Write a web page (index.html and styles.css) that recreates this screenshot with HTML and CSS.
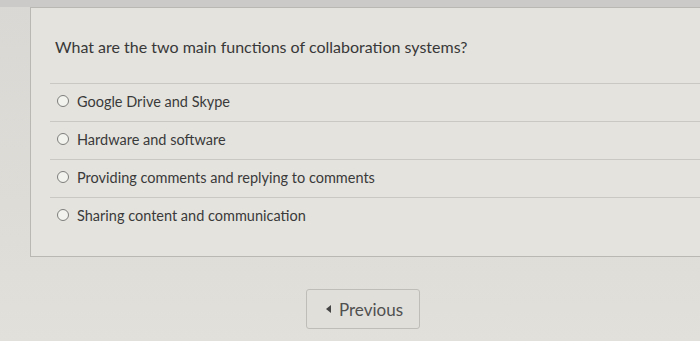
FILE: index.html
```html
<!DOCTYPE html>
<html>
<head>
<meta charset="utf-8">
<link rel="stylesheet" href="styles.css">
</head>
<body>
<div class="page">
  <div class="panel">
    <div class="question">What are the two main functions of collaboration systems?</div>
    <div class="options">
      <label class="option"><span class="radio"></span><span class="label">Google Drive and Skype</span></label>
      <label class="option"><span class="radio"></span><span class="label">Hardware and software</span></label>
      <label class="option"><span class="radio"></span><span class="label">Providing comments and replying to comments</span></label>
      <label class="option"><span class="radio"></span><span class="label">Sharing content and communication</span></label>
    </div>
  </div>
  <div class="nav">
    <button class="prev"><span class="tri"></span>Previous</button>
  </div>
</div>
</body>
</html>
```
FILE: styles.css
```css
html, body {
  margin: 0;
  padding: 0;
}
body {
  width: 700px;
  height: 341px;
  overflow: hidden;
  background: linear-gradient(180deg, #d9d8d4 0%, #dedcd7 60%, #e2e0da 100%);
  font-family: Lato, "Liberation Sans", sans-serif;
  color: #3b3b3b;
}
.page {
  border-top: 7px solid #cbcac8;
}
.panel {
  margin-left: 30px;
  height: 248px;
  border: 1px solid #b9b8b3;
  border-right: none;
  background: #e4e3de;
}
.question {
  padding: 29px 0 0 24px;
  font-size: 16px;
  line-height: 20px;
  height: 46px;
  color: #383838;
}
.options {
  margin-left: 19px;
}
.option {
  display: flex;
  align-items: center;
  height: 34px;
  padding-bottom: 3px;
  border-top: 1px solid #c9c8c3;
  padding-left: 7px;
}
.radio {
  width: 10px;
  height: 10px;
  border: 1.5px solid #7d7d7b;
  border-radius: 50%;
  background: #f2f2ef;
  margin-right: 8px;
  flex: none;
}
.label {
  font-size: 14.5px;
  color: #3a3a3a;
}
.nav {
  display: flex;
  justify-content: center;
  padding: 32px 0 0 25px;
}
.prev {
  width: 114px;
  height: 40px;
  background: #e0dfda;
  border: 1px solid #bebdb8;
  border-radius: 3px;
  font-family: Lato, "Liberation Sans", sans-serif;
  font-size: 17px;
  color: #505050;
  display: flex;
  align-items: center;
  justify-content: center;
  padding: 0 0 0 4px;
}
.tri {
  width: 0;
  height: 0;
  border-top: 4px solid transparent;
  border-bottom: 4px solid transparent;
  border-right: 5px solid #444;
  margin-right: 8px;
}
```
